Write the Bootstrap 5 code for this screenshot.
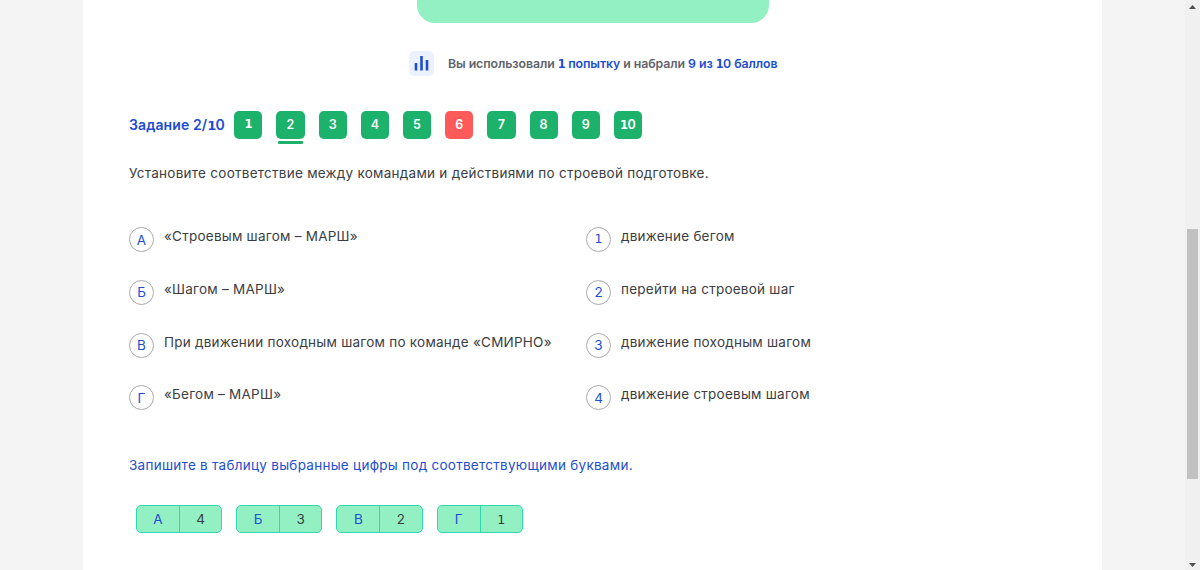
<!DOCTYPE html>
<html lang="ru">
<head>
    <meta charset="UTF-8">
    <meta name="viewport" content="width=device-width, initial-scale=1.0">
    <title>Задание 2/10</title>
    <link href="https://cdn.jsdelivr.net/npm/bootstrap@5.3.0/dist/css/bootstrap.min.css" rel="stylesheet">
    <style>
        body {
            height: 570px;
            background: #f4f4f4;
            color: #3b3d42;
            font-family: Inter, "Noto Sans", sans-serif;
            font-size: 13.5px;
            line-height: 20px;
        }
        .sheet { width: 1019px; margin-left: 83px; padding-left: 46px; }
        .blue { color: #1d4ed0; }
        .result-box { width: 352px; height: 23px; margin-left: 288px; background: #93f0c3; border-radius: 0 0 18px 18px; }
        .attempts { margin: 28px 0 0 280px; height: 25px; font-size: 12.3px; color: #5f646b; letter-spacing: -.06px; }
        .chart-icon { width: 25px; height: 25px; margin-right: 14px; }
        .task-nav { margin-top: 35px; height: 28px; }
        .task-title { width: 105.2px; font-size: 14px; letter-spacing: .1px; }
        .task-btn { width: 28.2px; height: 28px; margin-right: 14px; border-radius: 5px; background: #1cb26b; color: #fff; font-size: 12.5px; }
        .task-btn.wrong { background: #ff5a5a; }
        .task-btn.current::after {
            content: ""; position: absolute; left: 2px; right: 2px; bottom: -4.5px;
            height: 2.5px; border-radius: 1px; background: #1cb26b;
        }
        .question { margin-top: 24px; letter-spacing: .26px; }
        .pairs { margin-top: 44px; }
        .left-side { width: 457px; }
        .pair { height: 52.8px; letter-spacing: .24px; }
        .marker { width: 25px; height: 25px; margin-right: 10px; border: 1px solid #aaa; border-radius: 50%; letter-spacing: 0; }
        .pair-text { margin-top: -1px; }
        .hint { margin-top: 17px; letter-spacing: .27px; }
        .answers { margin: 30px 0 0 7px; gap: 14px; }
        .answer { width: 86.2px; height: 28px; background: #93f0c3; border: 1px solid #2fd8ae; border-radius: 5px; line-height: 26px; }
        .answer .letter { width: 42px; }
        .answer .digit { width: 42.2px; border-left: 1px solid #2fd8ae; }
        /* digit one with a foot */
        .one { font-family: "DejaVu Sans", sans-serif; font-size: .93em; line-height: 1; }
        .fw-semibold .one, .one.fw-semibold { letter-spacing: -.6px; }
        .scroll-track { width: 15px; background: #f0f0f0; padding: 5px 0 3px; }
        .scroll-thumb { width: 11px; height: 250px; background: #c1c1c1; margin-top: 219.500px; }
    </style>
    <script src="https://cdn.jsdelivr.net/npm/bootstrap@5.3.0/dist/js/bootstrap.bundle.min.js"></script>
</head>
<body class="d-flex justify-content-between overflow-hidden">
    <main class="sheet bg-white">
        <div class="result-box"></div>
        <div class="attempts d-flex align-items-center fw-semibold">
            <svg class="chart-icon" viewBox="0 0 25 25">
                <rect width="25" height="25" rx="5" fill="#ebf1ff"/>
                <path d="M7 12v7.500M12.500 5v14.500M18 9v10.500" stroke="#1d4ed0" stroke-width="2.600"/>
            </svg>
            <span>Вы использовали <span class="blue"><span class="one">1</span> попытку</span> и набрали <span class="blue">9 из <span class="one">1</span>0 баллов</span></span>
        </div>

        <div class="task-nav d-flex align-items-center">
            <div class="task-title blue fw-semibold">Задание 2/<span class="one">1</span>0</div>
            <div class="task-btn d-flex align-items-center justify-content-center fw-semibold"><span class="one">1</span></div>
            <div class="task-btn current position-relative d-flex align-items-center justify-content-center fw-semibold">2</div>
            <div class="task-btn d-flex align-items-center justify-content-center fw-semibold">3</div>
            <div class="task-btn d-flex align-items-center justify-content-center fw-semibold">4</div>
            <div class="task-btn d-flex align-items-center justify-content-center fw-semibold">5</div>
            <div class="task-btn wrong d-flex align-items-center justify-content-center fw-semibold">6</div>
            <div class="task-btn d-flex align-items-center justify-content-center fw-semibold">7</div>
            <div class="task-btn d-flex align-items-center justify-content-center fw-semibold">8</div>
            <div class="task-btn d-flex align-items-center justify-content-center fw-semibold">9</div>
            <div class="task-btn d-flex align-items-center justify-content-center fw-semibold"><span><span class="one">1</span>0</span></div>
        </div>

        <div class="question">Установите соответствие между командами и действиями по строевой подготовке.</div>

        <div class="pairs d-flex">
            <div class="left-side">
                <div class="pair d-flex align-items-start"><div class="marker blue d-flex align-items-center justify-content-center">А</div><span class="pair-text">«Строевым шагом – МАРШ»</span></div>
                <div class="pair d-flex align-items-start"><div class="marker blue d-flex align-items-center justify-content-center">Б</div><span class="pair-text">«Шагом – МАРШ»</span></div>
                <div class="pair d-flex align-items-start"><div class="marker blue d-flex align-items-center justify-content-center">В</div><span class="pair-text">При движении походным шагом по команде «СМИРНО»</span></div>
                <div class="pair d-flex align-items-start"><div class="marker blue d-flex align-items-center justify-content-center">Г</div><span class="pair-text">«Бегом – МАРШ»</span></div>
            </div>
            <div>
                <div class="pair d-flex align-items-start"><div class="marker blue d-flex align-items-center justify-content-center"><span class="one">1</span></div><span class="pair-text">движение бегом</span></div>
                <div class="pair d-flex align-items-start"><div class="marker blue d-flex align-items-center justify-content-center">2</div><span class="pair-text">перейти на строевой шаг</span></div>
                <div class="pair d-flex align-items-start"><div class="marker blue d-flex align-items-center justify-content-center">3</div><span class="pair-text">движение походным шагом</span></div>
                <div class="pair d-flex align-items-start"><div class="marker blue d-flex align-items-center justify-content-center">4</div><span class="pair-text">движение строевым шагом</span></div>
            </div>
        </div>

        <div class="hint blue">Запишите в таблицу выбранные цифры под соответствующими буквами.</div>

        <div class="answers d-flex">
            <div class="answer d-flex text-center"><div class="letter blue">А</div><div class="digit">4</div></div>
            <div class="answer d-flex text-center"><div class="letter blue">Б</div><div class="digit">3</div></div>
            <div class="answer d-flex text-center"><div class="letter blue">В</div><div class="digit">2</div></div>
            <div class="answer d-flex text-center"><div class="letter blue">Г</div><div class="digit"><span class="one">1</span></div></div>
        </div>
    </main>

    <div class="scroll-track d-flex flex-column align-items-center">
        <svg width="7" height="4" viewBox="0 0 7 4"><path d="M0 4 3.500 0 7 4z" fill="#505050"/></svg>
        <div class="scroll-thumb"></div>
        <svg class="mt-auto" width="7" height="4" viewBox="0 0 7 4"><path d="M0 0 3.500 4 7 0z" fill="#505050"/></svg>
    </div>
</body>
</html>
